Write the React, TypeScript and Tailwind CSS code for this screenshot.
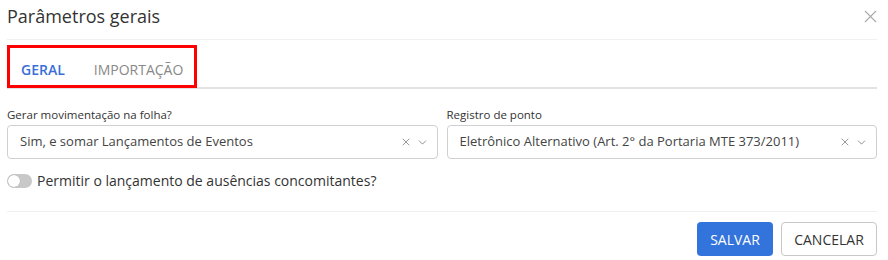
import { X, ChevronDown } from "lucide-react";

function Select({ label, value }: { label: string; value: string }) {
  return (
    <div>
      <p className="text-[11.5px] leading-[16px] text-[#333]">{label}</p>
      <div className="mt-[2px] h-[34px] border border-[#d0d0d0] rounded-[4px] flex items-center pl-[12px] pr-[8px]">
        <span className="flex-1 text-[13px] text-[#444] truncate">{value}</span>
        <X size={12} strokeWidth={1.5} className="text-[#777]" />
        <ChevronDown size={13} strokeWidth={1.5} className="ml-[4px] text-[#777]" />
      </div>
    </div>
  );
}

export default function App() {
  return (
    <div className="w-[888px] h-[260px] bg-white pl-[7px] pr-[11px] relative" style={{ fontFamily: "'Open Sans', sans-serif" }}>
      {/* header */}
      <div className="h-[40px] flex items-start justify-between border-b border-[#f0f0f0]">
        <h1 className="pt-[4px] text-[18px] leading-[24px] text-[#333]">Parâmetros gerais</h1>
        <X size={21} strokeWidth={1.3} className="mt-[6px] mr-[-4px] text-[#aaa]" />
      </div>

      {/* tabs */}
      <div className="mt-[5px] h-[44px] border-b-2 border-[#e3e3e3] flex items-center gap-[29px] pl-[14px] pt-[6px]">
        <span className="text-[14px] font-semibold text-[#3a6fd8]">GERAL</span>
        <span className="text-[14px] text-[#888]">IMPORTAÇÃO</span>
      </div>
      <div className="absolute left-[7px] top-[45px] w-[190px] h-[43px] border-[3px] border-[#f00] pointer-events-none" />

      {/* fields */}
      <div className="mt-[18px] grid grid-cols-2 gap-[9px]">
        <Select label="Gerar movimentação na folha?" value="Sim, e somar Lançamentos de Eventos" />
        <Select label="Registro de ponto" value="Eletrônico Alternativo (Art. 2° da Portaria MTE 373/2011)" />
      </div>

      <div className="mt-[11px] flex items-center gap-[5px]">
        <div className="w-[25px] h-[14px] rounded-full bg-[#c8c8c8] relative">
          <div className="absolute left-[1px] top-[1px] w-[12px] h-[12px] rounded-full bg-white shadow-[0_0_1px_rgba(0,0,0,0.3)]" />
        </div>
        <span className="text-[14px] text-[#333]">Permitir o lançamento de ausências concomitantes?</span>
      </div>

      {/* footer */}
      <div className="mt-[20px] border-t border-[#f0f0f0] flex justify-end gap-[8px] pt-[10px]">
        <button className="h-[34px] w-[76px] rounded-[4px] bg-[#3273dc] text-white text-[14px]">SALVAR</button>
        <button className="h-[34px] w-[96px] rounded-[4px] border border-[#c8c8c8] bg-white text-[#333] text-[14px]">CANCELAR</button>
      </div>
    </div>
  );
}
